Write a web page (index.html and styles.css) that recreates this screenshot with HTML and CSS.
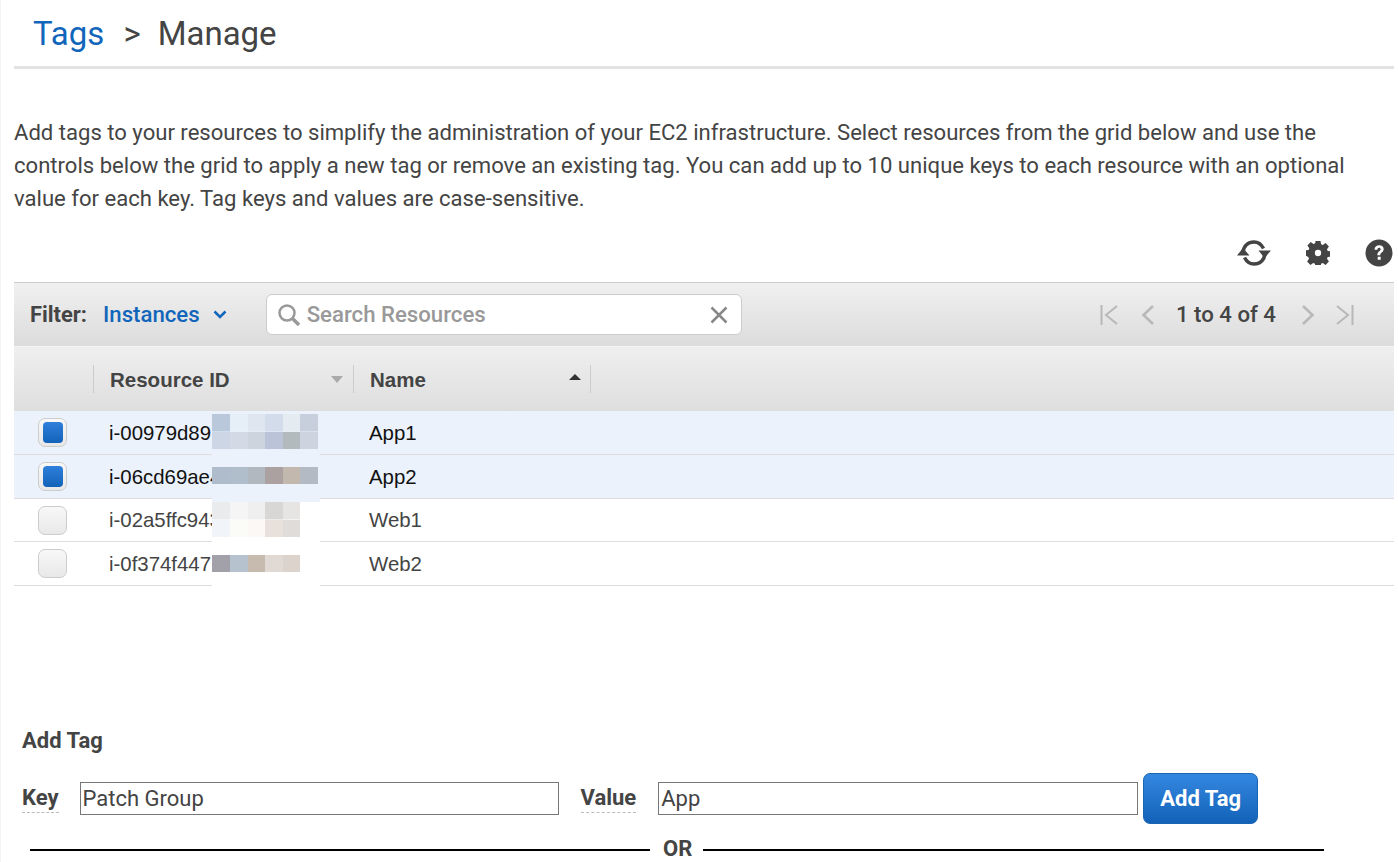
FILE: index.html
```html
<!DOCTYPE html>
<html lang="en">
<head>
<meta charset="utf-8">
<title>Tags &gt; Manage</title>
<link rel="stylesheet" href="styles.css">
</head>
<body>
<main class="page">
  <h1 class="crumbs"><a class="crumb-link">Tags</a><span class="crumb-sep">&gt;</span><span>Manage</span></h1>
  <p class="intro">Add tags to your resources to simplify the administration of your EC2 infrastructure. Select resources from the grid below and use the controls below the grid to apply a new tag or remove an existing tag. You can add up to 10 unique keys to each resource with an optional value for each key. Tag keys and values are case-sensitive.</p>

  <div class="tools">
    <svg class="tool-refresh" viewBox="0 0 34 26" width="34" height="26"><path d="M6 12.500C6.500 6 11 2 17 2c3.800 0 7 1.600 9.500 6.500" fill="none" stroke="#444" stroke-width="3.500"/><path d="M21.500 10.500h12.500l-6.500 7.500z" fill="#444"/><path d="M28 13.500C27.500 20 23 24 17 24c-3.800 0-7-1.600-9.500-6.500" fill="none" stroke="#444" stroke-width="3.500"/><path d="M0 15.500h12.500L6 8z" fill="#444"/></svg>
    <svg class="tool-gear" viewBox="0 0 24 24" width="24" height="24"><path fill="#444" fill-rule="evenodd" d="M9.500 0h5l.6 3.300 1.700.7 2.800-1.900 3.300 3.300-1.900 2.800.7 1.700 3.300.6v5l-3.300.6-.7 1.700 1.900 2.800-3.300 3.300-2.800-1.900-1.700.7-.6 3.300h-5l-.6-3.300-1.700-.7-2.800 1.900-3.300-3.300 1.900-2.800-.7-1.700L-.7 14.500v-5l3.300-.6.700-1.700L1.400 4.400l3.300-3.300 2.800 1.900 1.700-.7zM12 8.800a3.200 3.200 0 1 0 0 6.400 3.200 3.200 0 0 0 0-6.400z"/></svg>
    <svg class="tool-help" viewBox="0 0 28 28" width="28" height="28"><circle cx="14" cy="14" r="13.500" fill="#444"/><path d="M9.500 10.800c0-3 2-4.600 4.700-4.600s4.500 1.600 4.500 3.900c0 3.300-3.500 3.400-3.500 6.200h-2.900c0-4 3.400-4.200 3.400-6 0-1-.7-1.600-1.600-1.600-1 0-1.700.7-1.700 2.100z M12.700 17.800h3v3h-3z" fill="#fff"/></svg>
  </div>

  <section class="filter-bar">
    <span class="filter-label">Filter:</span>
    <span class="filter-value">Instances</span>
    <svg class="filter-caret" viewBox="0 0 14 9" width="14" height="9"><path d="M1.500 1.500 7 7l5.500-5.500" fill="none" stroke="#1166bb" stroke-width="2.500"/></svg>
    <div class="search">
      <svg viewBox="0 0 24 24" width="24" height="24"><circle cx="10" cy="10" r="7.500" fill="none" stroke="#999" stroke-width="2.500"/><path d="m15.500 15.500 6.500 6.500" stroke="#999" stroke-width="3.500"/></svg>
      <span class="search-text">Search Resources</span>
      <svg class="search-clear" viewBox="0 0 20 20" width="20" height="20"><path d="m2.500 2.500 15 15m0-15-15 15" stroke="#888" stroke-width="2.500"/></svg>
    </div>
    <div class="pager">
      <svg viewBox="0 0 20 22" width="20" height="22"><path d="M2.500 1v20M18 2 7 11l11 9" fill="none" stroke="#b8b8b8" stroke-width="2"/></svg>
      <svg class="pager-prev" viewBox="0 0 14 22" width="14" height="22"><path d="M12 2 2.500 11l9.500 9" fill="none" stroke="#b8b8b8" stroke-width="2.500"/></svg>
      <span class="pager-text">1 to 4 of 4</span>
      <svg class="pager-next" viewBox="0 0 14 22" width="14" height="22"><path d="m2 2 9.500 9L2 20" fill="none" stroke="#b8b8b8" stroke-width="2.500"/></svg>
      <svg class="pager-last" viewBox="0 0 20 22" width="20" height="22"><path d="M17.500 1v20M2 2l11 9-11 9" fill="none" stroke="#b8b8b8" stroke-width="2"/></svg>
    </div>
  </section>

  <div class="grid-head">
    <div class="col-check"></div>
    <div class="col-id head-cell"><span>Resource ID</span><i class="arrow-down"></i></div>
    <div class="col-name head-cell"><span>Name</span><i class="arrow-up"></i></div>
  </div>

  <div class="grid-body">
    <div class="row row-selected"><div class="col-check"><span class="check check-on"></span></div><div class="col-id">i-00979d89</div><div class="col-name">App1</div></div>
    <div class="row row-selected"><div class="col-check"><span class="check check-on"></span></div><div class="col-id">i-06cd69ae4</div><div class="col-name">App2</div></div>
    <div class="row row-plain row-short"><div class="col-check"><span class="check"></span></div><div class="col-id">i-02a5ffc943</div><div class="col-name">Web1</div></div>
    <div class="row row-plain"><div class="col-check"><span class="check"></span></div><div class="col-id">i-0f374f447</div><div class="col-name">Web2</div></div>
    <div class="mosaic">
      <div class="m m1"></div><div class="m m-blue"></div><div class="m m4"></div><div class="m m-blue"></div>
      <div class="m m6"></div><div class="m m-white"></div><div class="m m9"></div><div class="m m-white"></div>
    </div>
  </div>

  <section class="add-tag">
    <h2 class="add-title">Add Tag</h2>
    <div class="add-row">
      <label class="field-label label-key">Key</label>
      <input class="field field-key" type="text" value="Patch Group">
      <label class="field-label label-value">Value</label>
      <input class="field field-value" type="text" value="App">
      <button class="add-btn" type="button">Add Tag</button>
    </div>
    <div class="or-row"><span class="or-line or-left"></span><span class="or-text">OR</span><span class="or-line or-right"></span></div>
  </section>
</main>
</body>
</html>
```

FILE: styles.css
```css
* { box-sizing: border-box; }
html, body { margin: 0; height: 862px; overflow: hidden; background: #fff; }
body { font-family: Roboto, "Liberation Sans", sans-serif; color: #444; }
.page { width: 1394px; padding-left: 13px; border-left: 1px solid #f4f4f4; height: 862px; }

.crumbs { margin: 0; height: 69px; border-bottom: 3px solid #e3e3e3; padding: 14px 0 0 19px; font-size: 33px; line-height: 40px; font-weight: 400; color: #444; }
.crumb-link { color: #1166bb; }
.crumb-sep { margin: 0 17px 0 19px; }

.intro { margin: 47px 0 0; font-size: 22.080px; line-height: 33px; color: #444; }

.tools { display: flex; justify-content: flex-end; align-items: center; height: 28px; margin-top: 24px; }
.tool-gear { margin: 0 35px 0 35px; }
.tool-help { margin-right: 1px; }

.filter-bar { display: flex; align-items: center; height: 65px; margin-top: 15px; border-top: 1px solid #ccc; border-bottom: 1px solid #f5f5f5; background: linear-gradient(#f0f0f0, #dcdcdc); padding-left: 16px; font-size: 22.200px; font-weight: 500; }
.filter-label { color: #444; font-weight: 700; font-size: 21.900px; }
.filter-value { color: #1166bb; margin-left: 16px; padding-bottom: 2px; }
.filter-caret { margin-left: 13px; }
.search { display: flex; align-items: center; width: 476px; height: 41px; margin-left: 39px; padding: 0 12px 0 10px; background: #fff; border: 1px solid #ccc; border-radius: 6px; }
.search-text { color: #999; margin-left: 6px; flex: 1; padding-bottom: 2px; }
.pager { display: flex; align-items: center; margin-left: auto; margin-right: 39px; }
.pager-prev { margin-left: 22px; }
.pager-text { margin: 0 25px 0 21px; color: #444; padding-bottom: 2px; }
.pager-next { margin-right: 20px; }

.grid-head { display: flex; height: 64px; background: linear-gradient(#efefef, #dedede); font-family: "Liberation Sans", Arial, sans-serif; font-weight: 700; font-size: 20.500px; color: #444; align-items: center; }
.grid-head .col-check { height: 28px; border-right: 1px solid #ccc; }
.head-cell { position: relative; height: 28px; line-height: 30px; border-right: 1px solid #ccc; }
.col-check { width: 80px; flex: none; }
.col-id { width: 260px; flex: none; padding-left: 16px; }
.col-name { width: 237px; flex: none; padding-left: 16px; }
.arrow-down { position: absolute; right: 10px; top: 11px; border: 6px solid transparent; border-top: 7px solid #aaa; border-bottom: 0; }
.arrow-up { position: absolute; right: 9px; top: 9px; border: 6px solid transparent; border-bottom: 6px solid #333; border-top: 0; }

.grid-body { position: relative; font-family: "Liberation Sans", Arial, sans-serif; font-size: 20.400px; line-height: 24px; }
.row { display: flex; align-items: center; border-bottom: 1px solid #ddd; height: 44px; }
.row-short { height: 43px; }
.row-selected { background: #ebf2fc; color: #111; }
.row-plain { background: #fff; color: #444; }
.row .col-check { display: flex; padding-left: 24px; }
.row .col-id, .row .col-name { padding: 0 0 0 15px; }
.check { display: block; position: relative; width: 29px; height: 29px; border: 1px solid #ccc; border-radius: 7px; background: linear-gradient(#f8f8f8, #e8e8e8); }
.check-on::after { content: ""; position: absolute; inset: 3px 3px 3px 4px; border-radius: 4px; background: linear-gradient(#2f80db, #1262b8); }

.mosaic { position: absolute; left: 198px; top: 3px; width: 108px; }
.m { height: 17.600px; }
.m-blue { background: #ebf2fc; }
.m-white { background: #fff; }
.m1 { height: 35.200px; background-color: #ebf2fc; background-image:
  linear-gradient(90deg, #b9c8db 0 18px, #e6eef8 18px 36px, #e0e6f0 36px 53px, #d2dcea 53px 71px, #e4ecf1 71px 88px, #c8cfdc 88px 106px, transparent 106px),
  linear-gradient(90deg, #ccd6e4 0 18px, #d3dae5 18px 36px, #cdd4dd 36px 53px, #bac3d7 53px 71px, #b3babe 71px 88px, #cdd3df 88px 106px, transparent 106px);
  background-size: 100% 50%; background-position: 0 0, 0 100%; background-repeat: no-repeat; }
.m4 { background: linear-gradient(90deg, #afbccb 0 18px, #b0bdca 18px 36px, #b1b8c0 36px 53px, #aba1a0 53px 71px, #c3b8ad 71px 88px, #b3bac3 88px 106px, #ebf2fc 106px); }
.m6 { height: 35.200px; background-color: #fff; background-image:
  linear-gradient(90deg, #e9ebec 0 18px, #f5f5f5 18px 36px, #efefef 36px 53px, #d8d7d5 53px 71px, #e6e5e4 71px 88px, #fff 88px),
  linear-gradient(90deg, #f1f5f9 0 18px, #fbfbf8 18px 36px, #fcf8f6 36px 53px, #e8e0da 53px 71px, #e0dcd9 71px 88px, #fff 88px);
  background-size: 100% 50%; background-position: 0 0, 0 100%; background-repeat: no-repeat; }
.m9 { background: linear-gradient(90deg, #a2a1aa 0 18px, #b6c3cf 18px 36px, #c6bbae 36px 53px, #e1d9d3 53px 71px, #dbd3cc 71px 88px, #fff 88px); }

.add-tag { margin-top: 142px; padding-left: 8px; }
.add-title { margin: 0; font-size: 22px; line-height: 26px; font-weight: 700; color: #444; }
.add-row { display: flex; align-items: center; height: 52px; margin-top: 18px; }
.field-label { font-size: 22px; font-weight: 700; line-height: 28px; border-bottom: 1px dashed #bbb; color: #444; }
.field { height: 33px; width: 479px; border: 1px solid #777; padding: 0 2px; font: 400 22px Roboto, sans-serif; color: #444; background: #fff; }
.field-key { margin-left: 21px; }
.label-value { margin-left: 22px; }
.field-value { margin-left: 22px; width: 480px; }
.add-btn { margin-left: 5px; width: 115px; height: 51px; border: 1px solid #1a64b4; border-radius: 7px; background: linear-gradient(#3487e0, #1262b8); color: #fff; font: 700 22px Roboto, sans-serif; }
.or-row { display: flex; align-items: center; margin-top: 12px; padding-left: 8px; width: 1302px; height: 26px; }
.or-line { height: 2px; background: #000; flex: none; margin-top: 2px; }
.or-left { width: 620px; }
.or-right { width: 621px; }
.or-text { margin: 0 11px 0 13px; font-size: 22px; font-weight: 700; line-height: 26px; color: #444; }
```
